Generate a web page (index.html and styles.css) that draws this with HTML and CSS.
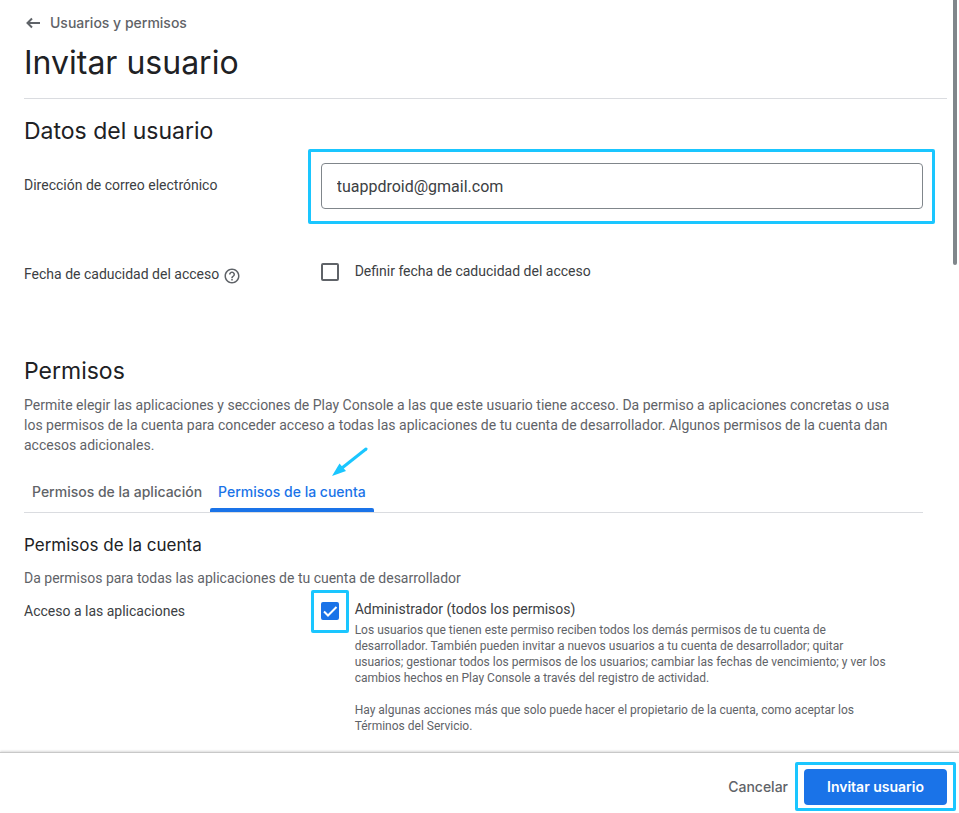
FILE: index.html
```html
<!DOCTYPE html>
<html lang="es">
<head>
<meta charset="utf-8">
<meta name="viewport" content="width=device-width, initial-scale=1">
<title>Invitar usuario</title>
<link rel="stylesheet" href="styles.css">
</head>
<body>
<main class="page">
  <header class="page-header">
    <a class="back" href="#">
      <svg class="back-icon" viewBox="0 0 18 18" aria-hidden="true"><path d="M16 9H4M8 4.500L3.500 9L8 13.500"/></svg>
      <span>Usuarios y permisos</span>
    </a>
    <h1>Invitar usuario</h1>
  </header>

  <section class="section user-data">
    <h2>Datos del usuario</h2>
    <div class="row email-row">
      <label class="row-label" for="email">Dirección de correo electrónico</label>
      <div class="field marked">
        <input class="text-input" id="email" type="email" value="tuappdroid@gmail.com">
      </div>
    </div>
    <div class="row expiry-row">
      <div class="row-label with-help">
        <span>Fecha de caducidad del acceso</span>
        <svg class="help-icon" viewBox="0 0 24 24" aria-hidden="true"><path d="M11 18h2v-2h-2v2zm1-16C6.480 2 2 6.480 2 12s4.480 10 10 10 10-4.480 10-10S17.520 2 12 2zm0 18c-4.410 0-8-3.590-8-8s3.590-8 8-8 8 3.590 8 8-3.590 8-8 8zm0-14c-2.210 0-4 1.790-4 4h2c0-1.100.9-2 2-2s2 .9 2 2c0 2-3 1.750-3 5h2c0-2.250 3-2.500 3-5 0-2.210-1.790-4-4-4z"/></svg>
      </div>
      <div class="option">
        <span class="check"><input class="checkbox" id="expiry" type="checkbox"></span>
        <label class="option-title" for="expiry">Definir fecha de caducidad del acceso</label>
      </div>
    </div>
  </section>

  <section class="section">
    <h2>Permisos</h2>
    <p class="text intro">Permite elegir las aplicaciones y secciones de Play Console a las que este usuario tiene acceso. Da permiso a aplicaciones concretas o usa los permisos de la cuenta para conceder acceso a todas las aplicaciones de tu cuenta de desarrollador. Algunos permisos de la cuenta dan accesos adicionales.</p>
    <div class="tabs" role="tablist">
      <button class="tab" type="button" role="tab" aria-selected="false">Permisos de la aplicación</button>
      <button class="tab tab-active" type="button" role="tab" aria-selected="true">Permisos de la cuenta
        <svg class="arrow" viewBox="0 0 36 30" aria-hidden="true"><path class="arrow-line" d="M34 2L10 21"/><path class="arrow-head" d="M0 29L7.500 16.500L14 24Z"/></svg>
      </button>
    </div>
    <h3>Permisos de la cuenta</h3>
    <p class="text">Da permisos para todas las aplicaciones de tu cuenta de desarrollador</p>
    <div class="row access-row">
      <div class="row-label">Acceso a las aplicaciones</div>
      <div class="option">
        <span class="check marked">
          <input class="checkbox" id="admin" type="checkbox" checked>
          <svg class="tick" viewBox="0 0 18 18" aria-hidden="true"><path d="M3 9.500L7 13.500L15.500 5"/></svg>
        </span>
        <div>
          <label class="option-title" for="admin">Administrador (todos los permisos)</label>
          <p class="detail">Los usuarios que tienen este permiso reciben todos los demás permisos de tu cuenta de desarrollador. También pueden invitar a nuevos usuarios a tu cuenta de desarrollador; quitar usuarios; gestionar todos los permisos de los usuarios; cambiar las fechas de vencimiento; y ver los cambios hechos en Play Console a través del registro de actividad.</p>
          <p class="detail">Hay algunas acciones más que solo puede hacer el propietario de la cuenta, como aceptar los Términos del Servicio.</p>
        </div>
      </div>
    </div>
  </section>
  <div class="scroll-thumb"></div>
</main>
<footer class="actions">
  <button class="button" type="button">Cancelar</button>
  <div class="marked submit"><button class="button button-primary" type="button">Invitar usuario</button></div>
</footer>
</body>
</html>
```
FILE: styles.css
```css
* { box-sizing: border-box; }

:root {
  --display: Inter, "Liberation Sans", sans-serif;
  --mark: #1ac6ff;
  --blue: #1a73e8;
  --line: #dadce0;
}

body {
  margin: 0;
  height: 100vh;
  display: flex;
  flex-direction: column;
  background: #fff;
  color: #3c4043;
  font: 14px/20px Roboto, "Liberation Sans", sans-serif;
}

h1, h2, h3, p { margin: 0; }

h1, h2, h3 {
  color: #202124;
  font-family: var(--display);
  font-weight: 400;
}

h1 { font-size: 32px; line-height: 40px; }
h2 { font-size: 23px; line-height: 32px; }
h3 { font-size: 17px; line-height: 24px; margin: 20px 0 11px; }

.page {
  position: relative;
  flex: 1;
  min-height: 0;
  overflow: hidden;
}

.page-header {
  margin: 0 12px 0 24px;
  padding: 13px 0 15px;
  border-bottom: 1px solid var(--line);
}

.back {
  display: flex;
  align-items: center;
  gap: 8px;
  margin-bottom: 10px;
  color: #5f6368;
  font-family: var(--display);
  font-size: 14px;
  font-weight: 500;
  text-decoration: none;
}

.back-icon {
  width: 18px;
  height: 18px;
  fill: none;
  stroke: currentColor;
  stroke-width: 2;
}

.section { margin: 0 36px 0 24px; }
.user-data { padding: 16px 0 70px; }

.row {
  display: grid;
  grid-template-columns: 33% 1fr;
}

.email-row { margin-top: 16px; }
.email-row .row-label { margin-top: 12px; }
.expiry-row { margin-top: 52px; }
.expiry-row .row-label { margin-top: 3px; }
.access-row { margin-top: 11px; }
.access-row .row-label { margin-top: 2px; }

.with-help { display: flex; gap: 4px; }

.help-icon {
  width: 18px;
  height: 18px;
  margin-top: 3px;
  fill: #5f6368;
}

.marked { position: relative; }

.marked::after {
  content: "";
  position: absolute;
  inset: -14px -12px -15px -13px;
  border: 3px solid var(--mark);
  border-radius: 2px;
  pointer-events: none;
}

.text-input {
  display: block;
  width: 100%;
  height: 46px;
  padding: 0 15px;
  border: 1px solid #80868b;
  border-radius: 4px;
  background: #fff;
  color: #3c4043;
  font: 16px/24px Roboto, "Liberation Sans", sans-serif;
}

.option { display: flex; gap: 16px; }

.check {
  flex: none;
  width: 18px;
  height: 18px;
  margin-top: 2px;
}

.access-row .check { margin-top: 3px; }

.check.marked::after { inset: -12px -10px -13px; }

.checkbox {
  appearance: none;
  display: block;
  width: 18px;
  height: 18px;
  margin: 0;
  border: 2px solid #5f6368;
  border-radius: 2px;
}

.checkbox:checked { border-color: var(--blue); background: var(--blue); }

.tick {
  position: absolute;
  inset: 0;
  fill: none;
  stroke: #fff;
  stroke-width: 2;
  pointer-events: none;
}

.text { color: #5f6368; }

.intro {
  margin-top: 8px;
  padding-right: 16px;
}

.tabs {
  display: flex;
  margin-top: 17px;
  border-bottom: 1px solid var(--line);
}

.tab {
  position: relative;
  height: 40px;
  padding: 0 8px;
  border: 0;
  background: none;
  color: #5f6368;
  font: 500 14px/20px var(--display);
}

.tab-active { color: var(--blue); }

.tab-active::after {
  content: "";
  position: absolute;
  inset: auto 0 0;
  height: 4px;
  border-radius: 2px 2px 0 0;
  background: var(--blue);
}

.arrow {
  position: absolute;
  right: 6px;
  top: -25px;
  width: 36px;
  height: 30px;
}

.arrow-line { fill: none; stroke: var(--mark); stroke-width: 3; stroke-linecap: round; }
.arrow-head { fill: var(--mark); }

.option-title { display: block; }

.detail {
  margin-bottom: 16px;
  padding-right: 32px;
  color: #5f6368;
  font-size: 12px;
  line-height: 16px;
}

.option-title + .detail { margin-top: 3px; }

.scroll-thumb {
  position: absolute;
  top: 0;
  right: 2px;
  width: 4px;
  height: 265px;
  border-radius: 0 0 2px 2px;
  background: #80868b;
}

.actions {
  position: relative;
  display: flex;
  justify-content: flex-end;
  align-items: center;
  padding: 16px 12px 8px 24px;
  border-top: 1px solid #c8c8c8;
  background: #fff;
  box-shadow: 0 -1px 2px #00000026;
}

.button {
  height: 36px;
  padding: 0 16px;
  border: 0;
  border-radius: 4px;
  background: none;
  color: #5f6368;
  font: 500 14px/20px var(--display);
}

.button-primary {
  padding: 0 23px;
  background: var(--blue);
  color: #fff;
  font-weight: 600;
}

.submit::after { inset: -7px -9px -6px; }
```
